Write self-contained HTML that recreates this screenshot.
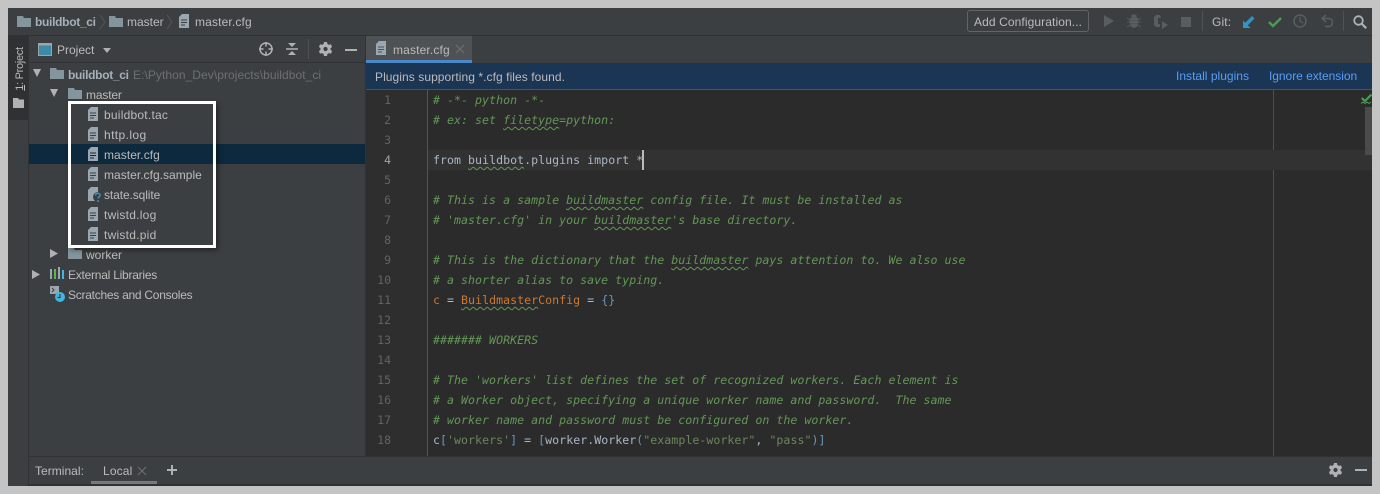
<!DOCTYPE html>
<html><head><meta charset="utf-8"><style>
html,body{margin:0;padding:0;width:1380px;height:494px;overflow:hidden;background:#c4c4c4}
.a{position:absolute}
#f{position:absolute;left:8px;top:8px;width:1364px;height:478px;background:#3c3f41;overflow:hidden}
.t{position:absolute;font:12px/16px "Liberation Sans",sans-serif;color:#bbbbbb;white-space:pre;letter-spacing:.15px}
.c{position:absolute;left:425px;font:italic 11.6px/20px "DejaVu Sans Mono",monospace;color:#629755;white-space:pre;letter-spacing:.027px}
.n{font-style:normal;color:#a9b7c6}
.o{color:#cc7832;font-style:normal}
.s{color:#6a8759;font-style:normal}
.b{color:#6897bb}
.u{text-decoration:underline wavy #629755 1px;text-underline-offset:2px}
.g{position:absolute;left:345px;width:38px;text-align:right;font:11.5px/20px "DejaVu Sans Mono",monospace;color:#606366}
svg{position:absolute;overflow:visible}
</style></head><body><div id="f">
<!-- top bar -->
<div class="a" style="left:0;top:27px;width:1364px;height:1px;background:#323232"></div>
<svg style="left:9px;top:8px" width="14" height="11"><path d="M0 0h6l1 2h7v9H0z" fill="#90a4ae" fill-opacity=".85"/></svg>
<div class="t" style="left:27px;top:6px;font-weight:bold;color:#a6b0ba;letter-spacing:-.3px">buildbot_ci</div>
<svg style="left:92px;top:7px" width="6" height="14"><path d="M0 0l5 7-5 7" fill="none" stroke="#555"/></svg>
<svg style="left:101px;top:8px" width="14" height="11"><path d="M0 0h6l1 2h7v9H0z" fill="#90a4ae" fill-opacity=".85"/></svg>
<div class="t" style="left:119px;top:6px;letter-spacing:0">master</div>
<svg style="left:159px;top:7px" width="6" height="14"><path d="M0 0l5 7-5 7" fill="none" stroke="#555"/></svg>
<svg style="left:171px;top:6px" width="10" height="14"><path d="M3 0h7v14H0V3z" fill="#9aa7b0"/><path d="M2 6h6M2 8.500h6M2 11h4" stroke="#3c3f41"/></svg>
<div class="t" style="left:187px;top:6px">master.cfg</div>
<div class="a" style="left:959px;top:2px;width:120px;height:20px;border:1px solid #646464;border-radius:3px"></div>
<div class="t" style="left:966px;top:6px;color:#bbb;letter-spacing:.1px">Add Configuration...</div>
<svg style="left:1096px;top:7px" width="10" height="12"><path d="M0 0l10 6-10 6z" fill="#5a5d5f"/></svg>
<svg style="left:1119px;top:6px" width="14" height="15"><path d="M3.500 4h7v2h-7zM3 7h8v2H3zM3.500 10h7c0 2-1.500 3.500-3.500 3.500S3.500 12 3.500 10zM5 1h4v2H5zM0 4l3 2M14 4l-3 2M0 8h3M11 8h3M0 13l3-2M14 13l-3-2" fill="#5a5d5f" stroke="#5a5d5f" stroke-width=".8"/></svg>
<svg style="left:1145px;top:6px" width="16" height="15"><path d="M7 1H3L1 3v8l2 2h4v-3H5V4h3z" fill="#5a5d5f"/><path d="M9 7l6 4-6 4z" fill="#5a5d5f"/></svg>
<div class="a" style="left:1173px;top:9px;width:10px;height:10px;background:#5a5d5f"></div>
<div class="a" style="left:1194px;top:3px;width:1px;height:20px;background:#4e5254"></div>
<div class="t" style="left:1204px;top:6px">Git:</div>
<svg style="left:1235px;top:8px" width="12" height="12"><path d="M0 12V4.500l2.300 2.300L9 0l2.500 2.500L4.800 9.200 7.500 12z" fill="#3592c4"/></svg>
<svg style="left:1260px;top:9px" width="14" height="10"><path d="M1 5l4 4 8-8" fill="none" stroke="#499c54" stroke-width="2.400"/></svg>
<svg style="left:1285px;top:6px" width="14" height="14"><circle cx="7" cy="7" r="6" fill="none" stroke="#5a5d5f" stroke-width="1.500"/><path d="M7 3v4l3 2" fill="none" stroke="#5a5d5f" stroke-width="1.300"/></svg>
<svg style="left:1313px;top:6px" width="13" height="14"><path d="M5 1L1 4.500 5 8M1.500 4.500H8c2.200 0 3.500 1.800 3.500 3.800S10 12.500 8 12.500H4" fill="none" stroke="#5a5d5f" stroke-width="1.500"/></svg>
<div class="a" style="left:1335px;top:3px;width:1px;height:20px;background:#4e5254"></div>
<svg style="left:1345px;top:7px" width="14" height="14"><circle cx="5.500" cy="5.500" r="4.300" fill="none" stroke="#afb1b3" stroke-width="1.800"/><path d="M9 9l4.200 4.200" stroke="#afb1b3" stroke-width="2.200"/></svg>
<!-- left strip -->
<div class="a" style="left:0;top:28px;width:20px;height:450px;background:#3c3f41;border-right:1px solid #323232"></div>
<div class="a" style="left:0;top:28px;width:20px;height:84px;background:#2f3133"></div>
<div class="t" style="left:-18px;top:54px;width:60px;text-align:center;transform:rotate(-90deg);font-size:11px;line-height:14px;letter-spacing:-.3px"><span style="text-decoration:underline">1</span>: Project</div>
<svg style="left:5px;top:90px" width="11" height="10"><path d="M0 0h5l1 1.500h5V10H0z" fill="#afb1b3"/></svg>
<!-- project panel header -->
<div class="a" style="left:21px;top:54px;width:336px;height:1px;background:#323232"></div>
<svg style="left:30px;top:35px" width="14" height="13"><rect x=".5" y=".5" width="13" height="12" fill="#3f8ba7" stroke="#9aa7b0"/><rect x=".5" y=".5" width="13" height="2" fill="#9aa7b0"/></svg>
<div class="t" style="left:49px;top:34px;letter-spacing:0">Project</div>
<svg style="left:95px;top:40px" width="8" height="5"><path d="M0 0h8L4 5z" fill="#afb1b3"/></svg>
<svg style="left:251px;top:34px" width="14" height="14"><circle cx="7" cy="7" r="6" fill="none" stroke="#afb1b3" stroke-width="1.500"/><path d="M7 0v4.500M7 9.500V14M0 7h4.500M9.500 7H14" stroke="#afb1b3" stroke-width="1.500"/></svg>
<svg style="left:278px;top:34px" width="12" height="14"><path d="M0 7h12" stroke="#afb1b3" stroke-width="1.500"/><path d="M2 1h8L6 5zM2 13h8L6 9z" fill="#afb1b3"/></svg>
<div class="a" style="left:300px;top:31px;width:1px;height:20px;background:#4e5254"></div>
<svg style="left:311px;top:34px" width="13" height="14" viewBox="0 0 13 14"><path d="M5 0h3l.4 2 1.600.9 2-.7 1 2.800-1.500 1.300v1.400L13 9l-1 2.800-2-.7-1.600.9L8 14H5l-.4-2-1.600-.9-2 .7L0 9l1.500-1.300V6.300L0 5l1-2.800 2 .7L4.600 2z" fill="#afb1b3" fill-rule="evenodd"/><circle cx="6.500" cy="7" r="2.100" fill="#3c3f41"/></svg>
<div class="a" style="left:337px;top:41px;width:12px;height:2px;background:#afb1b3"></div>
<!-- tree -->
<svg style="left:25px;top:61px" width="8" height="8"><path d="M0 0h8L4 8z" fill="#afb1b3"/></svg>
<svg style="left:42px;top:60px" width="14" height="11"><path d="M0 0h6l1 2h7v9H0z" fill="#90a4ae" fill-opacity=".85"/></svg>
<div class="t" style="left:60px;top:59px;font-weight:bold;color:#a6b0ba;letter-spacing:-.3px">buildbot_ci</div>
<div class="t" style="left:125px;top:59px;color:#6d6f71;letter-spacing:.06px">E:\Python_Dev\projects\buildbot_ci</div>
<svg style="left:42px;top:81px" width="8" height="8"><path d="M0 0h8L4 8z" fill="#afb1b3"/></svg>
<svg style="left:60px;top:80px" width="14" height="11"><path d="M0 0h6l1 2h7v9H0z" fill="#90a4ae" fill-opacity=".85"/></svg>
<div class="t" style="left:78px;top:79px;letter-spacing:-.15px">master</div>
<div class="a" style="left:21px;top:136px;width:336px;height:20px;background:#0d293e"></div>
<svg style="left:80px;top:99px" width="10" height="15"><path d="M3 0h7v14H0V3z" fill="#9aa7b0"/><path d="M2 6h6M2 8.500h6M2 11h4" stroke="#3c3f41"/></svg>
<div class="t" style="left:96px;top:99px;letter-spacing:.23px">buildbot.tac</div>
<svg style="left:80px;top:119px" width="10" height="15"><path d="M3 0h7v14H0V3z" fill="#9aa7b0"/><path d="M2 6h6M2 8.500h6M2 11h4" stroke="#3c3f41"/></svg>
<div class="t" style="left:96px;top:119px;letter-spacing:.4px">http.log</div>
<svg style="left:80px;top:139px" width="10" height="15"><path d="M3 0h7v14H0V3z" fill="#9aa7b0"/><path d="M2 6h6M2 8.500h6M2 11h4" stroke="#0d293e"/></svg>
<div class="t" style="left:96px;top:139px;letter-spacing:.05px">master.cfg</div>
<svg style="left:80px;top:159px" width="10" height="15"><path d="M3 0h7v14H0V3z" fill="#9aa7b0"/><path d="M2 6h6M2 8.500h6M2 11h4" stroke="#3c3f41"/></svg>
<div class="t" style="left:96px;top:159px;letter-spacing:.03px">master.cfg.sample</div>
<svg style="left:80px;top:179px" width="14" height="15"><path d="M3 0h7v14H0V3z" fill="#9aa7b0"/><circle cx="10" cy="10" r="5" fill="#3c3f41"/><path d="M7.500 8.500C7.500 5.500 12 5.500 12 8.500c0 1.500-2 1.500-2 3M10 13v2" fill="none" stroke="#3592c4" stroke-width="1.500"/></svg>
<div class="t" style="left:96px;top:179px;letter-spacing:-.1px">state.sqlite</div>
<svg style="left:80px;top:199px" width="10" height="15"><path d="M3 0h7v14H0V3z" fill="#9aa7b0"/><path d="M2 6h6M2 8.500h6M2 11h4" stroke="#3c3f41"/></svg>
<div class="t" style="left:96px;top:199px;letter-spacing:.25px">twistd.log</div>
<svg style="left:80px;top:219px" width="10" height="15"><path d="M3 0h7v14H0V3z" fill="#9aa7b0"/><path d="M2 6h6M2 8.500h6M2 11h4" stroke="#3c3f41"/></svg>
<div class="t" style="left:96px;top:219px;letter-spacing:.25px">twistd.pid</div>
<svg style="left:42px;top:241px" width="8" height="9"><path d="M0 0l8 4.500-8 4.500z" fill="#afb1b3"/></svg>
<svg style="left:60px;top:240px" width="14" height="11"><path d="M0 0h6l1 2h7v9H0z" fill="#90a4ae" fill-opacity=".85"/></svg>
<div class="t" style="left:78px;top:239px;letter-spacing:0">worker</div>
<svg style="left:24px;top:262px" width="8" height="9"><path d="M0 0l8 4.500-8 4.500z" fill="#afb1b3"/></svg>
<svg style="left:42px;top:259px" width="14" height="12"><path d="M1 2v10" stroke="#9aa7b0" stroke-width="2"/><path d="M5 2v10" stroke="#62b543" stroke-width="2"/><path d="M9 0v12" stroke="#9aa7b0" stroke-width="2"/><path d="M13 3v9" stroke="#40b6e0" stroke-width="2"/></svg>
<div class="t" style="left:60px;top:259px;letter-spacing:-.24px">External Libraries</div>
<svg style="left:42px;top:278px" width="15" height="16"><path d="M0 0h9v8H0z" fill="#9aa7b0"/><path d="M2 2l2 2-2 2" fill="none" stroke="#3c3f41"/><circle cx="10" cy="11" r="5" fill="#40b6e0"/><path d="M10 8v3.500h-2.500" fill="none" stroke="#3c3f41" stroke-width="1.200"/></svg>
<div class="t" style="left:60px;top:279px;letter-spacing:-.26px">Scratches and Consoles</div>
<!-- annotation box -->
<div class="a" style="left:60px;top:93px;width:148px;height:147px;border:3px solid #fff;box-sizing:border-box;box-shadow:2px 2px 5px rgba(0,0,0,.45)"></div>
<!-- divider -->
<div class="a" style="left:357px;top:28px;width:1px;height:420px;background:#323232"></div>
<!-- tabs -->
<div class="a" style="left:358px;top:28px;width:1006px;height:27px;background:#3c3f41"></div>
<div class="a" style="left:358px;top:28px;width:106px;height:24px;background:#4e5254"></div>
<div class="a" style="left:358px;top:52px;width:106px;height:3px;background:#4a88c7"></div>
<svg style="left:368px;top:33px" width="10" height="15"><path d="M3 0h7v14H0V3z" fill="#9aa7b0"/><path d="M2 6h6M2 8.500h6M2 11h4" stroke="#4e5254"/></svg>
<div class="t" style="left:385px;top:34px">master.cfg</div>
<svg style="left:448px;top:37px" width="8" height="8"><path d="M0 0l8 8M8 0l-8 8" stroke="#6f7173"/></svg>
<!-- banner -->
<div class="a" style="left:358px;top:55px;width:1006px;height:26px;background:#1b3555;border-bottom:1px solid #515151"></div>
<div class="t" style="left:367px;top:61px;color:#bbb;letter-spacing:.07px">Plugins supporting *.cfg files found.</div>
<div class="t" style="left:1168px;top:60px;color:#589df6;letter-spacing:.02px">Install plugins</div>
<div class="t" style="left:1261px;top:60px;color:#589df6;letter-spacing:-.04px">Ignore extension</div>
<!-- editor -->
<div class="a" style="left:358px;top:82px;width:1006px;height:366px;background:#2b2b2b"></div>
<div class="a" style="left:358px;top:82px;width:61px;height:366px;background:#2e2e2f"></div>
<div class="a" style="left:419px;top:82px;width:1px;height:366px;background:#555"></div>
<div class="a" style="left:1265px;top:82px;width:1px;height:366px;background:#4d4d4d"></div>
<div class="a" style="left:420px;top:142px;width:944px;height:20px;background:#323232"></div>
<div class="a" style="left:1357px;top:99px;width:7px;height:48px;background:#4b4b4b"></div>
<svg style="left:1353px;top:85px" width="11" height="11"><path d="M.8 5l3.200 3 6.500-6.500" fill="none" stroke="#499c54" stroke-width="2.200"/><path d="M0 10.500l2-1.500 2 1.500 2-1.500 2 1.500 2-1.500" fill="none" stroke="#499c54"/></svg>
<div class="g" style="top:82px">1</div><div class="g" style="top:102px">2</div><div class="g" style="top:122px">3</div><div class="g" style="top:142px;color:#a4a3a3">4</div><div class="g" style="top:162px">5</div><div class="g" style="top:182px">6</div><div class="g" style="top:202px">7</div><div class="g" style="top:222px">8</div><div class="g" style="top:242px">9</div><div class="g" style="top:262px">10</div><div class="g" style="top:282px">11</div><div class="g" style="top:302px">12</div><div class="g" style="top:322px">13</div><div class="g" style="top:342px">14</div><div class="g" style="top:362px">15</div><div class="g" style="top:382px">16</div><div class="g" style="top:402px">17</div><div class="g" style="top:422px">18</div>
<div class="c" style="top:82px"># -*- python -*-</div>
<div class="c" style="top:102px"># ex: set <span class="u">filetype</span>=python:</div>
<div class="c n" style="top:142px">from <span class="u">buildbot</span>.plugins import *</div>
<div class="a" style="left:634px;top:142px;width:2px;height:20px;background:#bbb"></div>
<div class="c" style="top:182px"># This is a sample <span class="u">buildmaster</span> config file. It must be installed as</div>
<div class="c" style="top:202px"># 'master.cfg' in your <span class="u">buildmaster</span>'s base directory.</div>
<div class="c" style="top:242px"># This is the dictionary that the <span class="u">buildmaster</span> pays attention to. We also use</div>
<div class="c" style="top:262px"># a shorter alias to save typing.</div>
<div class="c n" style="top:282px"><span class="o">c</span> = <span class="o u">Buildmaster</span><span class="o">Config</span> = <span class="b">{}</span></div>
<div class="c" style="top:322px">####### WORKERS</div>
<div class="c" style="top:362px"># The 'workers' list defines the set of recognized workers. Each element is</div>
<div class="c" style="top:382px"># a Worker object, specifying a unique worker name and password.  The same</div>
<div class="c" style="top:402px"># worker name and password must be configured on the worker.</div>
<div class="c n" style="top:422px">c<span class="b">[</span><span class="s">'workers'</span><span class="b">]</span> = <span class="b">[</span>worker.Worker<span class="b">(</span><span class="s">"example-worker"</span>, <span class="s">"pass"</span><span class="b">)]</span></div>
<!-- bottom bar -->
<div class="a" style="left:21px;top:448px;width:1343px;height:1px;background:#323232"></div>
<div class="t" style="left:27px;top:455px;letter-spacing:.03px">Terminal:</div>
<div class="t" style="left:95px;top:455px">Local</div>
<svg style="left:130px;top:459px" width="8" height="8"><path d="M0 0l8 8M8 0l-8 8" stroke="#6f7173"/></svg>
<svg style="left:159px;top:457px" width="10" height="10"><path d="M5 0v10M0 5h10" stroke="#afb1b3" stroke-width="2"/></svg>
<div class="a" style="left:83px;top:473px;width:66px;height:3px;background:#747a80"></div>
<div class="a" style="left:21px;top:476px;width:1343px;height:2px;background:#2f3133"></div>
<svg style="left:1321px;top:455px" width="13" height="14" viewBox="0 0 13 14"><path d="M5 0h3l.4 2 1.600.9 2-.7 1 2.800-1.500 1.300v1.400L13 9l-1 2.800-2-.7-1.600.9L8 14H5l-.4-2-1.600-.9-2 .7L0 9l1.500-1.300V6.300L0 5l1-2.800 2 .7L4.600 2z" fill="#afb1b3"/><circle cx="6.500" cy="7" r="2.100" fill="#3c3f41"/></svg>
<div class="a" style="left:1347px;top:461px;width:12px;height:2px;background:#afb1b3"></div>
</div></body></html>
